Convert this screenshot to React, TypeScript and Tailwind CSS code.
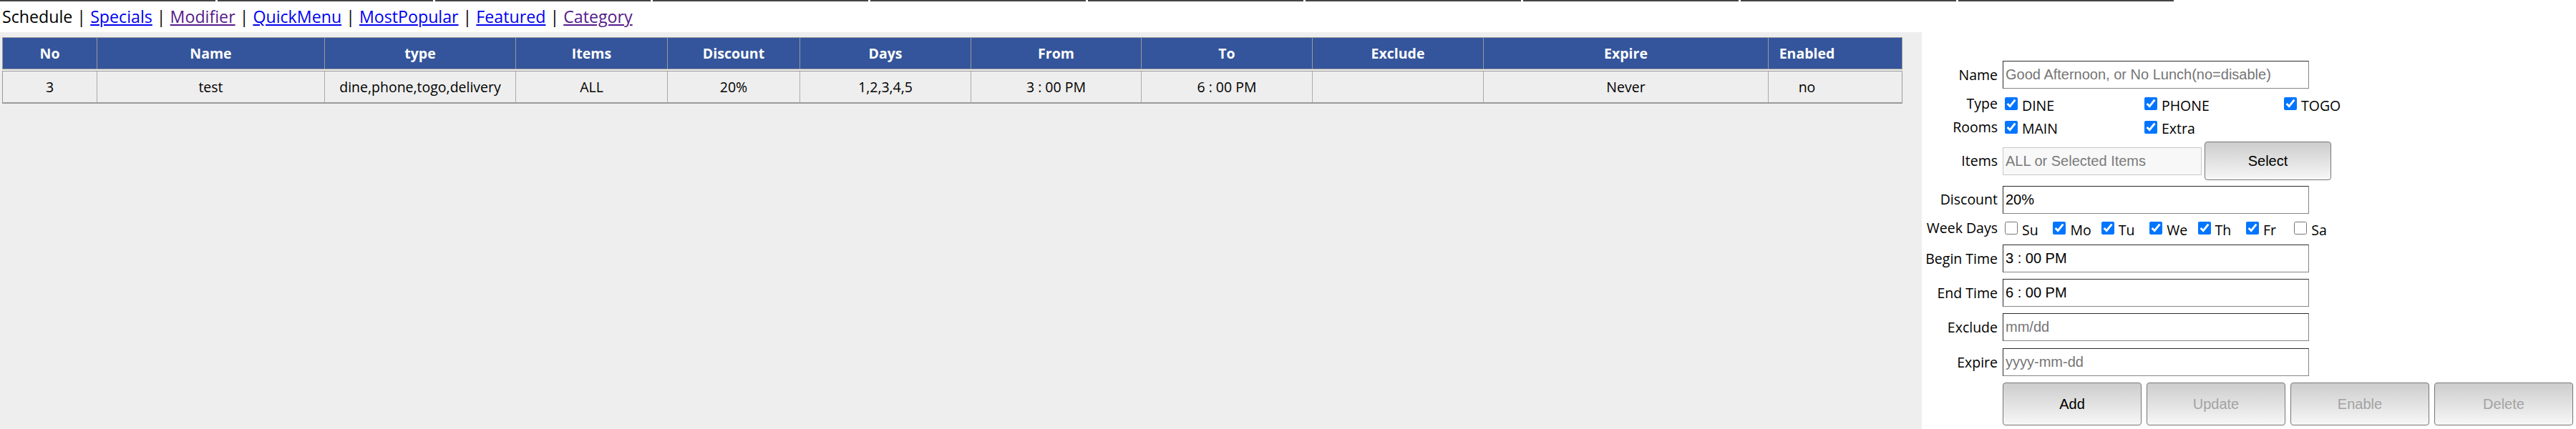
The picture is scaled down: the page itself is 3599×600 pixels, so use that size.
import React from "react";

const headers = ["No", "Name", "type", "Items", "Discount", "Days", "From", "To", "Exclude", "Expire", "Enabled"];
const rowData = ["3", "test", "dine,phone,togo,delivery", "ALL", "20%", "1,2,3,4,5", "3 : 00 PM", "6 : 00 PM", "", "Never", "no"];

const gridCols =
  "grid grid-cols-[132px_318px_267px_212px_185px_239px_238px_239px_239px_398px_186px]";

function Label({ children }: { children: React.ReactNode }) {
  return (
    <div className="w-[106px] shrink-0 text-right text-[19.5px] leading-[26px] text-black">{children}</div>
  );
}

function Check({ label, checked, width }: { label: string; checked: boolean; width: string }) {
  return (
    <label className={`flex items-center ${width}`}>
      <input
        type="checkbox"
        defaultChecked={checked}
        className="m-0 ml-[3px] h-[18px] w-[18px] shrink-0 accent-[#0075ff]"
      />
      <span className="pl-[6px] pt-[5px] text-[19.5px] leading-[26px] text-black">{label}</span>
    </label>
  );
}

function TextInput({ value, placeholder }: { value?: string; placeholder?: string }) {
  return (
    <input
      type="text"
      defaultValue={value}
      placeholder={placeholder}
      className="h-[39px] w-[428px] border border-[#858585] border-l-[#2b2b2b] border-t-[#2b2b2b] bg-white px-[3px] text-[20px] text-black outline-none placeholder:text-[#757575] [font-family:'Liberation_Sans',Arial,sans-serif]"
    />
  );
}

function Btn({ children, disabled }: { children: React.ReactNode; disabled?: boolean }) {
  return (
    <button
      className={`h-[60px] w-[194px] rounded-[4px] border border-[#767676] bg-linear-to-b from-[#cdcdcd] to-[#f7f7f7] text-[20px] [font-family:'Liberation_Sans',Arial,sans-serif] ${
        disabled ? "text-[#a3a3a3]" : "text-black"
      }`}
    >
      {children}
    </button>
  );
}

export default function App() {
  return (
    <div className="flex h-screen w-[3599px] flex-col overflow-hidden bg-white [font-family:'Open_Sans',sans-serif]">
      {/* top clipped tab bars */}
      <div className="flex h-[2px] gap-[3px]">
        {Array.from({ length: 10 }).map((_, i) => (
          <div key={i} className="h-[2px] w-[301px] bg-[#444444]" />
        ))}
      </div>
      {/* nav */}
      <div className="h-[43px] pl-[3px] pt-[5px] text-[23.2px] leading-[33px] text-black">
        Schedule | <a className="text-[#0000ee] underline">Specials</a> |{" "}
        <a className="text-[#551a8b] underline">Modifier</a> |{" "}
        <a className="text-[#0000ee] underline">QuickMenu</a> |{" "}
        <a className="text-[#0000ee] underline">MostPopular</a> |{" "}
        <a className="text-[#0000ee] underline">Featured</a> |{" "}
        <a className="text-[#551a8b] underline">Category</a>
      </div>
      <div className="flex flex-1">
        {/* left table panel */}
        <div className="w-[2685px] shrink-0 bg-[#eeeeee] pl-[3px] pt-[7px]">
          <div className={`${gridCols} h-[45px] w-[2655px] border border-[#9a9a9a] bg-[#34559b]`}>
            {headers.map((h, i) => (
              <div
                key={h}
                className={`flex items-center justify-center text-[19.5px] font-bold text-white ${
                  i < headers.length - 1 ? "border-r border-[#9a9a9a]" : "pr-[79px]"
                }`}
              >
                {h}
              </div>
            ))}
          </div>
          <div
            className={`${gridCols} mt-[2px] h-[46px] w-[2655px] border border-b-2 border-[#9a9a9a] bg-[#eeeeee]`}
          >
            {rowData.map((d, i) => (
              <div
                key={i}
                className={`flex items-center justify-center text-[19.5px] text-black ${
                  i < rowData.length - 1 ? "border-r border-[#ababab]" : "pr-[79px]"
                }`}
              >
                {d}
              </div>
            ))}
          </div>
        </div>
        {/* right form panel */}
        <div className="flex flex-1 flex-col pt-[35.5px]">
          <div className="flex h-[48px] items-center gap-[7px]">
            <Label>Name</Label>
            <TextInput placeholder="Good Afternoon, or No Lunch(no=disable)" />
          </div>
          <div className="flex h-[33px] items-center gap-[7px]">
            <Label>Type</Label>
            <div className="flex">
              <Check label="DINE" checked width="w-[195px]" />
              <Check label="PHONE" checked width="w-[195px]" />
              <Check label="TOGO" checked width="w-[195px]" />
            </div>
          </div>
          <div className="flex h-[32px] items-center gap-[7px]">
            <Label>Rooms</Label>
            <div className="flex">
              <Check label="MAIN" checked width="w-[195px]" />
              <Check label="Extra" checked width="w-[195px]" />
            </div>
          </div>
          <div className="flex h-[63px] items-center gap-[7px]">
            <Label>Items</Label>
            <div className="flex items-center gap-[4px]">
              <input
                type="text"
                readOnly
                placeholder="ALL or Selected Items"
                className="h-[39px] w-[278px] border border-[#c8c8c8] bg-[#f8f8f8] px-[3px] text-[20px] outline-none placeholder:text-[#7a7a7a] [font-family:'Liberation_Sans',Arial,sans-serif]"
              />
              <button className="h-[54px] w-[177px] rounded-[4px] border border-[#767676] bg-linear-to-b from-[#cdcdcd] to-[#f7f7f7] text-[20px] text-black [font-family:'Liberation_Sans',Arial,sans-serif]">
                Select
              </button>
            </div>
          </div>
          <div className="flex h-[45px] items-center gap-[7px]">
            <Label>Discount</Label>
            <TextInput value="20%" />
          </div>
          <div className="flex h-[35px] items-center gap-[7px]">
            <Label>Week Days</Label>
            <div className="flex">
              <Check label="Su" checked={false} width="w-[67.4px]" />
              <Check label="Mo" checked width="w-[67.4px]" />
              <Check label="Tu" checked width="w-[67.4px]" />
              <Check label="We" checked width="w-[67.4px]" />
              <Check label="Th" checked width="w-[67.4px]" />
              <Check label="Fr" checked width="w-[67.4px]" />
              <Check label="Sa" checked={false} width="w-[67.4px]" />
            </div>
          </div>
          <div className="flex h-[50px] items-center gap-[7px]">
            <Label>Begin Time</Label>
            <TextInput value="3 : 00 PM" />
          </div>
          <div className="flex h-[46px] items-center gap-[7px]">
            <Label>End Time</Label>
            <TextInput value="6 : 00 PM" />
          </div>
          <div className="flex h-[50px] items-center gap-[7px]">
            <Label>Exclude</Label>
            <TextInput placeholder="mm/dd" />
          </div>
          <div className="flex h-[48px] items-center gap-[7px]">
            <Label>Expire</Label>
            <TextInput placeholder="yyyy-mm-dd" />
          </div>
          <div className="flex h-[69px] items-center gap-[7px]">
            <div className="w-[106px] shrink-0" />
            <div className="flex gap-[7px]">
              <Btn>Add</Btn>
              <Btn disabled>Update</Btn>
              <Btn disabled>Enable</Btn>
              <Btn disabled>Delete</Btn>
            </div>
          </div>
        </div>
      </div>
    </div>
  );
}
